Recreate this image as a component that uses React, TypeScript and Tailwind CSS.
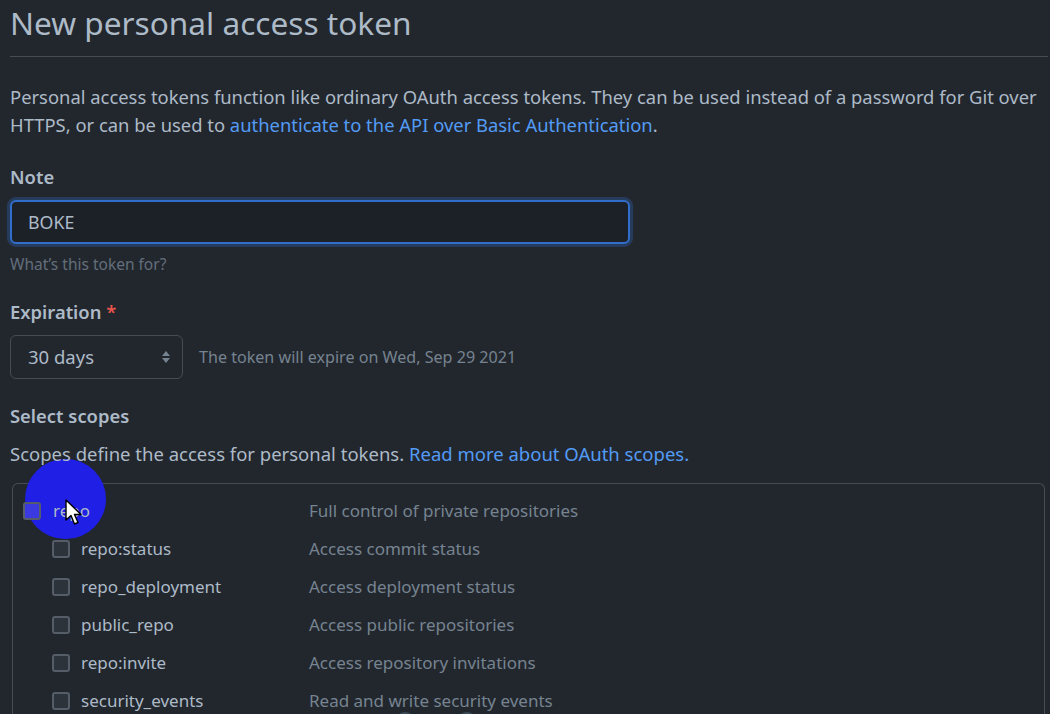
import React from "react";

const scopes = [
  { name: "repo:status", desc: "Access commit status" },
  { name: "repo_deployment", desc: "Access deployment status" },
  { name: "public_repo", desc: "Access public repositories" },
  { name: "repo:invite", desc: "Access repository invitations" },
  { name: "security_events", desc: "Read and write security events" },
];

const Checkbox = ({ clear = false }: { clear?: boolean }) => (
  <span
    className={
      "inline-block h-[18px] w-[18px] shrink-0 rounded-[3px] border-2 border-[#545d68] " +
      (clear ? "bg-[#3a3ae0]" : "bg-[#2d333b]")
    }
  />
);

const Cursor = () => (
  <svg width="20" height="28" viewBox="0 0 20 28" className="absolute left-[52px] top-[1px]">
    <path d="M1 1 L1 21 L6 16.5 L9.5 25 L13 23.5 L9.5 15.5 L16 15.5 Z" fill="#ffffff" stroke="#000000" strokeWidth="1.4" strokeLinejoin="round" />
  </svg>
);

export default function App() {
  return (
    <div className="h-[714px] w-[1050px] overflow-hidden bg-[#22272e] font-['Noto_Sans',sans-serif] text-[#adbac7]">
      <div className="pl-[10px] pr-[2px]">
        <h1 className="border-b border-[#444c56] pb-[12px] pt-[1px] text-[31.6px] font-normal leading-[43px] text-[#adbac7]">
          New personal access token
        </h1>
        <p className="mt-[26px] whitespace-nowrap text-[18.4px] leading-[28px]">
          Personal access tokens function like ordinary OAuth access tokens. They can be used instead of a password for Git over
          <br />
          HTTPS, or can be used to <span className="text-[#539bf5]">authenticate to the API over Basic Authentication</span>.
        </p>

        <div className="mt-[26px] text-[18.4px] font-semibold leading-[24px]">Note</div>
        <div className="mt-[11px] flex h-[44px] w-[620px] items-center rounded-[6px] border-2 border-[#316dca] bg-[#1c2128] px-[16px] text-[17.8px] shadow-[0_0_0_3px_rgba(49,109,202,0.3)]">
          BOKE
        </div>
        <div className="mt-[10px] text-[15.5px] leading-[20px] text-[#636e7b]">What’s this token for?</div>

        <div className="mt-[26px] text-[18.4px] font-semibold leading-[24px]">
          Expiration <span className="text-[#e5534b]">*</span>
        </div>
        <div className="mt-[11px] flex items-center gap-[16px]">
          <div className="flex h-[44px] w-[173px] items-center justify-between rounded-[6px] border border-[#444c56] bg-[#22272e] pl-[17px] pr-[11px] text-[18.5px]">
            <span>30 days</span>
            <svg width="10" height="16" viewBox="0 0 10 16">
              <path d="M5 2 L9 7 L1 7 Z M5 14 L9 9 L1 9 Z" fill="#768390" />
            </svg>
          </div>
          <span className="text-[16.1px] text-[#768390]">The token will expire on Wed, Sep 29 2021</span>
        </div>

        <div className="mt-[25px] text-[18.4px] font-semibold leading-[24px]">Select scopes</div>
        <p className="relative z-10 mt-[14px] text-[18.5px] leading-[24px]">
          Scopes define the access for personal tokens.{" "}
          <span className="text-[#539bf5]">Read more about OAuth scopes.</span>
        </p>

        <div className="relative ml-[2px] mt-[17px] h-[260px] w-[1033px] rounded-t-[6px] border border-b-0 border-[#444c56] pt-[14px]">
          <div className="absolute left-[12px] top-[-25px] h-[80px] w-[81px] rounded-full bg-[#1f1fe6]" />
          <div className="absolute left-[382px] top-[228px] h-[20px] w-[20px] rounded-full bg-[#3b4a55]" />
          <div className="absolute left-[444px] top-[228px] h-[20px] w-[20px] rounded-full bg-[#3b4a55]" />
          <div className="relative flex h-[26px] items-center text-[17px]">
            <div className="flex w-[296px] items-center gap-[12px] pl-[10px]">
              <Checkbox clear />
              <span>repo</span>
            </div>
            <span className="text-[#768390]">Full control of private repositories</span>
            <Cursor />
          </div>
          <div className="relative mt-[12px] flex flex-col gap-[12px]">
            {scopes.map((s) => (
              <div key={s.name} className="flex h-[26px] items-center text-[17px]">
                <div className="flex w-[296px] items-center gap-[11px] pl-[39px]">
                  <Checkbox />
                  <span>{s.name}</span>
                </div>
                <span className="text-[#768390]">{s.desc}</span>
              </div>
            ))}
          </div>
        </div>
      </div>
    </div>
  );
}
